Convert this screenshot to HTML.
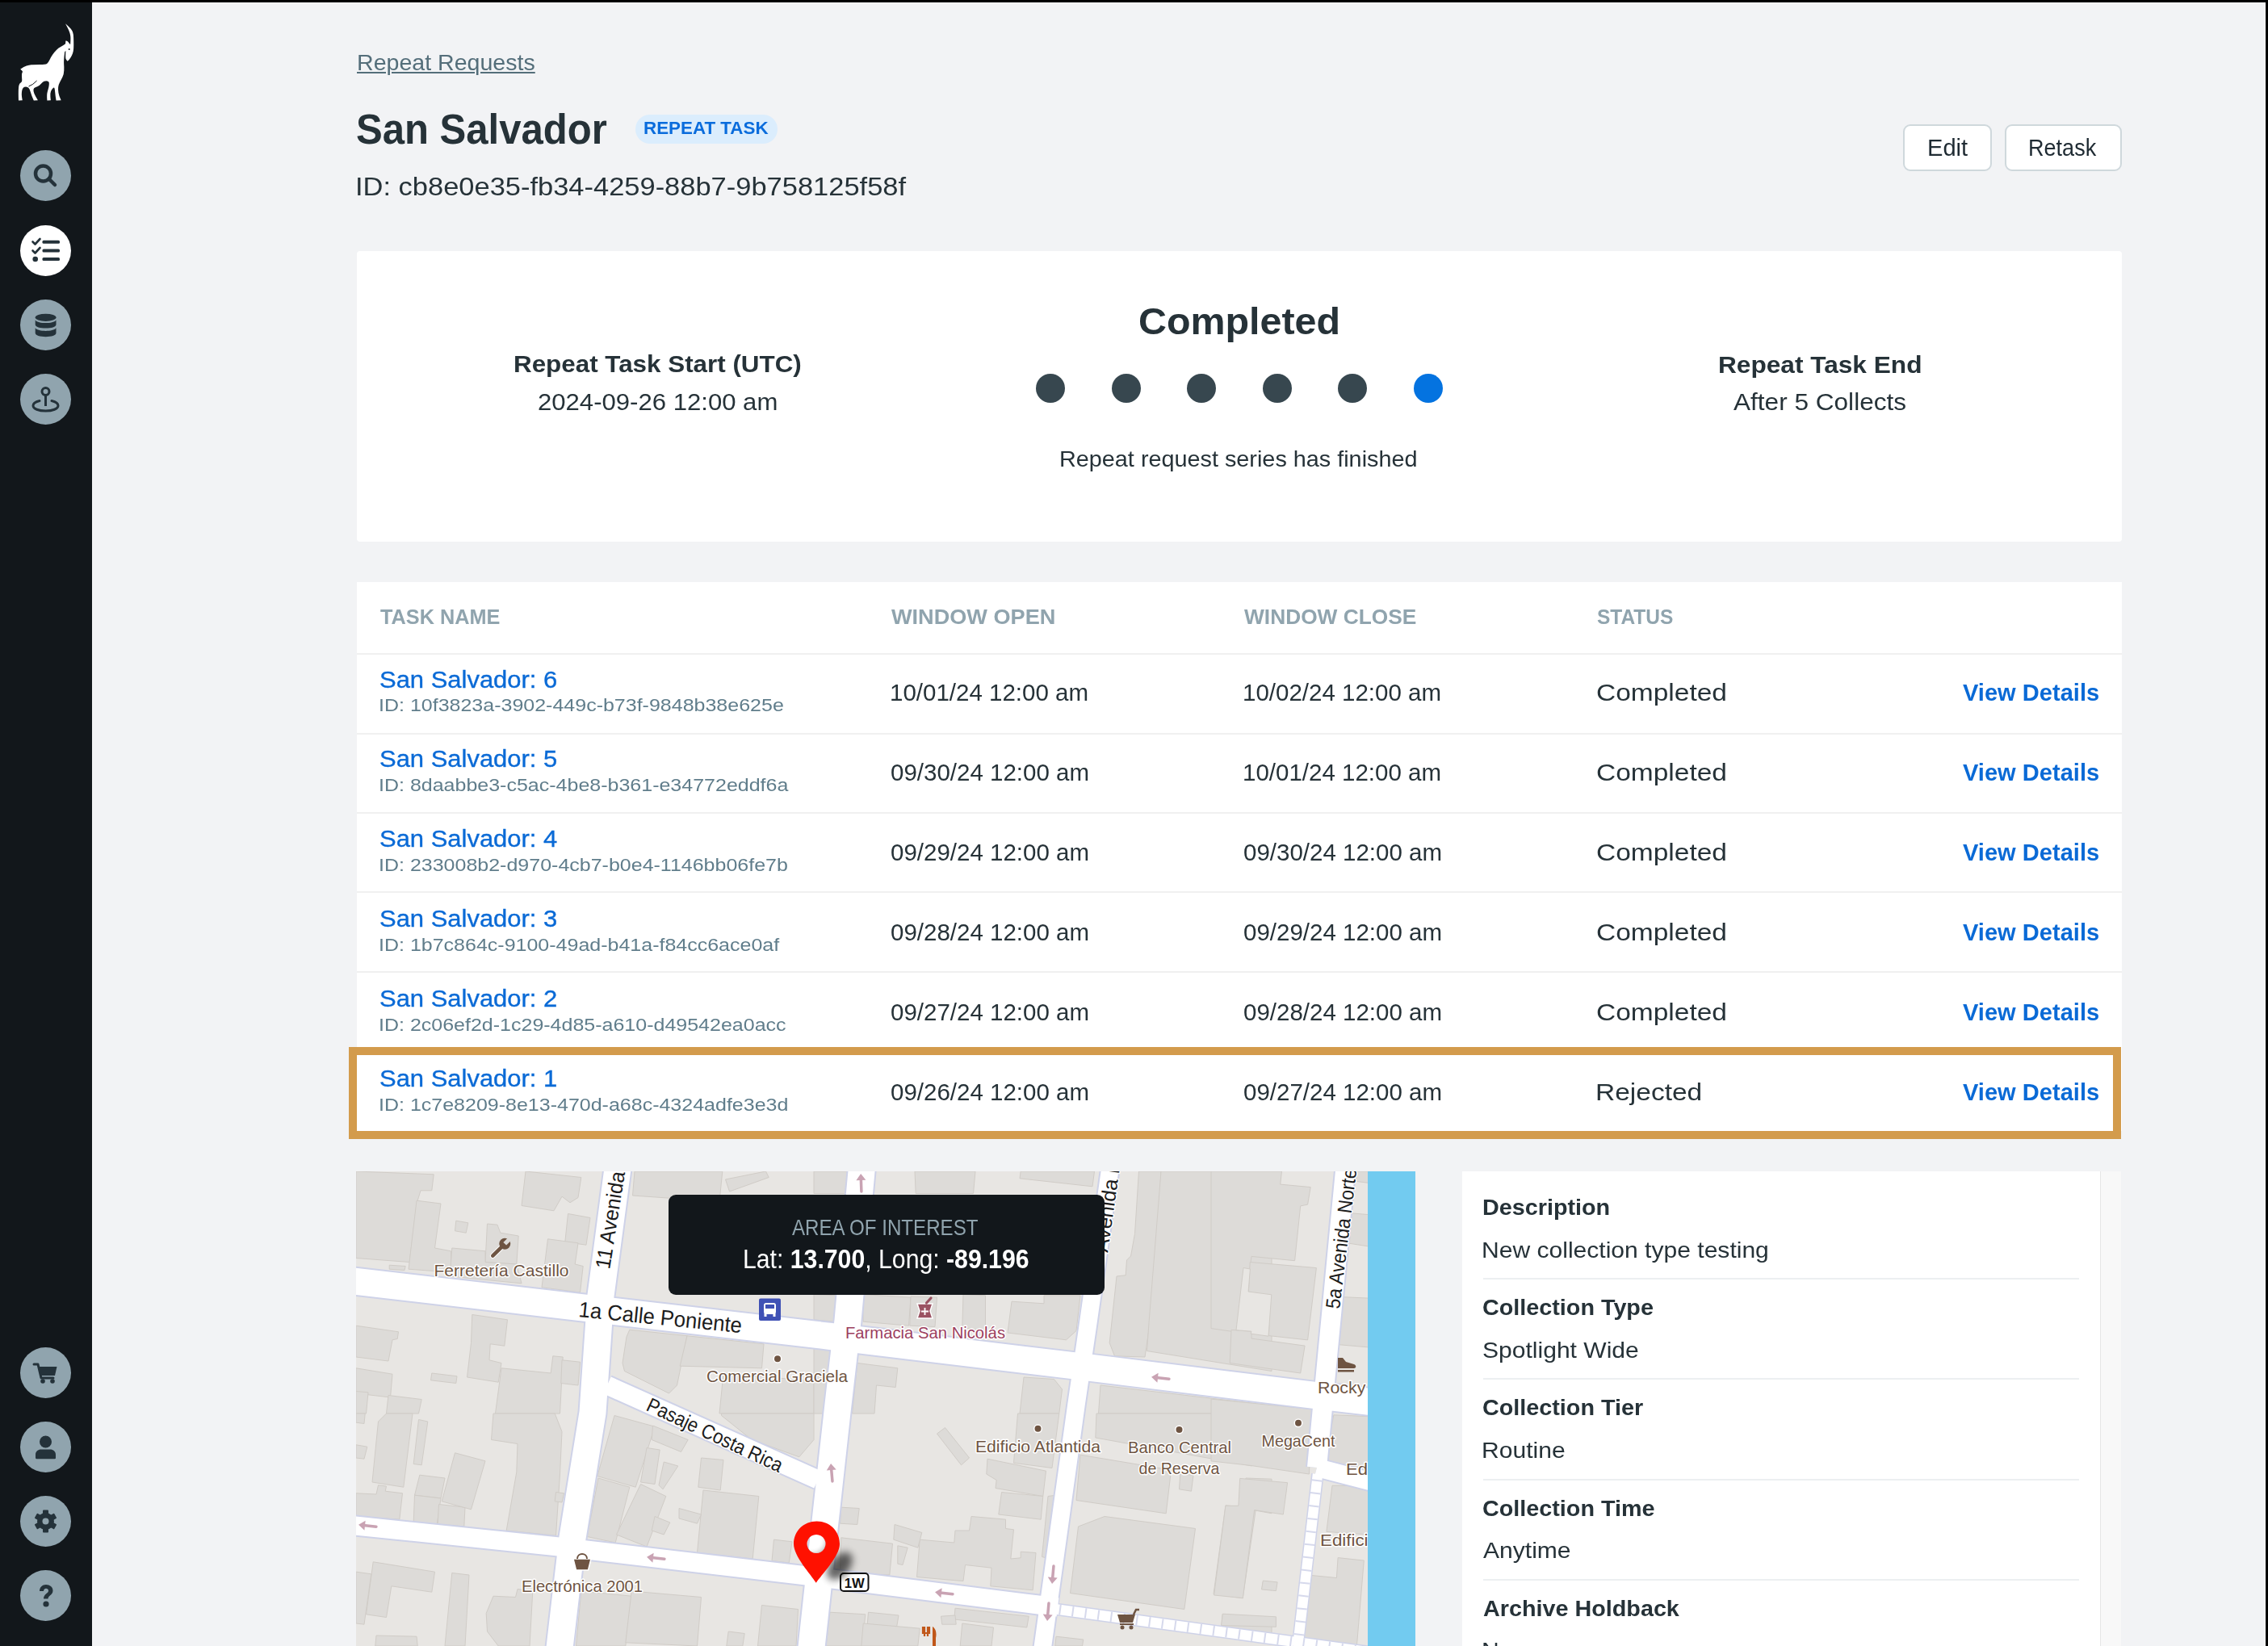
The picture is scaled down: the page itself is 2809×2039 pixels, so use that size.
<!DOCTYPE html>
<html><head><meta charset="utf-8"><title>San Salvador</title>
<style>
html,body{margin:0;padding:0;}
body{width:2809px;height:2039px;overflow:hidden;position:relative;background:#f2f3f5;font-family:"Liberation Sans",sans-serif;}
.abs{position:absolute;}
.t{position:absolute;white-space:pre;transform-origin:0 0;}
#topbar{left:0;top:0;width:2809px;height:3px;background:#000;}
#side{left:0;top:3px;width:114px;height:2036px;background:#12171b;}
.nav{position:absolute;left:25px;width:63px;height:63px;border-radius:50%;background:#90a4ae;}
.nav svg{position:absolute;left:0;top:0;}
.card{background:#fff;border-radius:4px;}
.btn{background:#fff;border:2px solid #cfd8dc;border-radius:9px;box-sizing:border-box;}
.dot{position:absolute;width:36px;height:36px;border-radius:50%;background:#37474f;top:463px;}
.sep{position:absolute;height:2px;background:#eceff1;}
</style></head>
<body>
<div id="topbar" class="abs"></div>
<div class="abs" style="left:114px;top:3px;width:2692px;height:1px;background:#fbfbfc"></div>
<div class="abs" style="left:2805px;top:3px;width:1px;height:2036px;background:#fdfdfd"></div>
<div class="abs" style="left:2806px;top:0;width:3px;height:2039px;background:#000"></div>
<div id="side" class="abs">
  <svg class="abs" style="left:0;top:-3px" width="114" height="140" viewBox="0 0 114 140">
    <path fill="#fff" d="M81.05,29.15 Q85.84,33.30 87.59,35.53 Q89.35,37.76 90.14,40.00 Q90.94,42.23 91.10,46.38 Q91.26,50.53 91.26,55.63 Q91.26,60.74 90.78,63.29 Q90.30,65.84 89.03,68.40 Q87.75,70.95 86.47,72.86 Q85.20,74.78 83.60,75.73 L83.60,75.73 Q81.69,74.14 81.37,72.54 Q81.05,70.95 81.37,62.65 L81.37,62.65 L80.09,64.57 Q78.82,76.05 79.14,79.24 Q79.45,82.43 79.29,87.22 Q79.14,92.01 77.38,95.52 Q75.63,99.03 74.03,101.90 Q72.43,104.77 72.12,107.96 Q71.80,111.15 72.43,114.98 Q73.07,118.81 75.63,124.23 L75.63,124.23 L69.56,124.55 Q68.61,118.81 68.13,113.39 Q67.65,107.96 66.53,108.60 Q65.41,109.24 63.98,111.15 Q62.54,113.07 62.38,115.94 Q62.22,118.81 62.86,124.23 L62.86,124.23 L58.40,124.55 Q57.76,117.53 58.71,114.02 Q59.67,110.51 60.31,107.96 Q60.95,105.41 60.79,102.86 Q60.63,100.30 57.28,100.30 Q53.93,100.30 52.33,102.22 Q50.74,104.13 48.82,105.73 Q46.91,107.32 44.36,107.96 Q41.80,108.60 41.48,110.83 Q41.16,113.07 42.44,115.94 Q43.72,118.81 46.91,124.23 L46.91,124.23 L41.80,124.55 Q39.25,118.81 37.65,113.39 Q36.06,107.96 33.19,107.64 Q30.32,107.32 29.04,108.60 Q27.76,109.88 27.28,112.11 Q26.81,114.34 26.81,116.90 Q26.81,119.45 27.76,124.23 L27.76,124.23 L22.98,124.55 Q22.66,114.34 22.98,109.24 Q23.30,104.13 25.37,102.86 Q27.44,101.58 27.28,99.35 Q27.13,97.11 26.97,93.92 Q26.81,90.73 27.76,89.45 Q28.72,88.18 25.21,85.63 L25.21,85.63 Q29.68,82.43 32.87,81.48 Q36.06,80.52 38.93,80.20 Q41.80,79.88 49.14,79.88 Q56.48,79.88 58.08,78.92 Q59.67,77.97 61.27,74.46 Q62.86,70.95 65.10,67.76 Q67.33,64.57 69.88,62.01 Q72.43,59.46 75.63,57.87 Q78.82,56.27 81.05,54.36 L81.05,54.36 L81.37,50.53 Q83.92,50.21 86.16,54.36 L86.16,54.36 L87.11,54.99 Q87.75,47.34 87.11,43.83 Q86.47,40.32 85.20,37.44 Q83.92,34.57 81.05,29.15 L81.05,29.15 Z"/><circle cx="85.7" cy="60.9" r="1" fill="#12171b"/><path d="M45.6,100 Q41,105 35.5,107" fill="none" stroke="#12171b" stroke-width="1"/>
  </svg>
  <!-- nav icons -->
  <div class="nav" style="top:183px"><svg width="63" height="63" viewBox="0 0 63 63"><circle cx="28.5" cy="29" r="9.5" fill="none" stroke="#24323a" stroke-width="4.5"/><line x1="35.5" y1="35.5" x2="43" y2="43" stroke="#24323a" stroke-width="4.5" stroke-linecap="round"/></svg></div>
  <div class="nav" style="top:276px;background:#fff"><svg width="63" height="63" viewBox="0 0 63 63"><path d="M15.5,20.5 l3,3 l6,-6.5" fill="none" stroke="#24323a" stroke-width="2.6" stroke-linecap="round" stroke-linejoin="round"/><path d="M15.5,31.5 l3,3 l6,-6.5" fill="none" stroke="#24323a" stroke-width="2.6" stroke-linecap="round" stroke-linejoin="round"/><circle cx="18.7" cy="42" r="3.3" fill="#24323a"/><rect x="27.5" y="18.8" width="21.5" height="4" rx="1.5" fill="#24323a"/><rect x="27.5" y="29.5" width="21.5" height="4" rx="1.5" fill="#24323a"/><rect x="27.5" y="40" width="21.5" height="4" rx="1.5" fill="#24323a"/></svg></div>
  <div class="nav" style="top:368px"><svg width="63" height="63" viewBox="0 0 63 63"><ellipse cx="31.6" cy="22.3" rx="12.9" ry="4.6" fill="#24323a"/><path d="M18.7,25.5 v5.5 c0,3 5.8,4.6 12.9,4.6 s12.9,-1.6 12.9,-4.6 v-5.5 c-2,2.6 -7,3.6 -12.9,3.6 s-10.9,-1 -12.9,-3.6z" fill="#24323a"/><path d="M18.7,35.3 v6.3 c0,3 5.8,4.6 12.9,4.6 s12.9,-1.6 12.9,-4.6 v-6.3 c-2,2.6 -7,3.6 -12.9,3.6 s-10.9,-1 -12.9,-3.6z" fill="#24323a"/></svg></div>
  <div class="nav" style="top:460px"><svg width="63" height="63" viewBox="0 0 63 63"><circle cx="31.5" cy="22" r="4.5" fill="none" stroke="#24323a" stroke-width="3"/><line x1="31.5" y1="26" x2="31.5" y2="40" stroke="#24323a" stroke-width="3"/><path d="M24,33.5 C18,35 16,37 16,39.5 C16,43.5 23,46 31.5,46 C40,46 47,43.5 47,39.5 C47,37 45,35 39,33.5" fill="none" stroke="#24323a" stroke-width="3" stroke-linecap="round"/></svg></div>
  <div class="nav" style="top:1666px"><svg width="63" height="63" viewBox="0 0 63 63"><path d="M17,21 h5 l4,17 h15" fill="none" stroke="#24323a" stroke-width="3" stroke-linecap="round" stroke-linejoin="round"/><path d="M23.5,24 h22 l-2.5,11 h-17z" fill="#24323a"/><circle cx="28" cy="42" r="2.8" fill="#24323a"/><circle cx="40" cy="42" r="2.8" fill="#24323a"/></svg></div>
  <div class="nav" style="top:1758px"><svg width="63" height="63" viewBox="0 0 63 63"><circle cx="31.5" cy="25" r="7.5" fill="#24323a"/><path d="M19,45 v-4 c0,-4 3,-6.5 7,-6.5 h11 c4,0 7,2.5 7,6.5 v4 c0,0.8 -0.5,1.2 -1.2,1.2 h-22.6 c-0.7,0 -1.2,-0.4 -1.2,-1.2z" fill="#24323a"/></svg></div>
  <div class="nav" style="top:1850px"><svg width="63" height="63" viewBox="0 0 63 63"><g transform="translate(31.5,31.5)" fill="#24323a"><circle r="10.5"/><rect x="-3.5" y="-14" width="7" height="28" rx="1"/><rect x="-3.5" y="-14" width="7" height="28" rx="1" transform="rotate(60)"/><rect x="-3.5" y="-14" width="7" height="28" rx="1" transform="rotate(120)"/></g><circle cx="31.5" cy="31.5" r="4" fill="#90a4ae"/></svg></div>
  <div class="nav" style="top:1942px"><svg width="63" height="63" viewBox="0 0 63 63"><path d="M24,26 c0,-5 3.5,-8 8,-8 c4.5,0 8.5,2.8 8.5,7.5 c0,5.5 -6,6 -6,10 h-5.5 c0,-6 6,-6.5 6,-10 c0,-1.8 -1.3,-2.8 -3,-2.8 c-1.8,0 -3,1.3 -3,3.3z" fill="#24323a"/><circle cx="32" cy="42" r="3.6" fill="#24323a"/></svg></div>
</div>

<!-- header boxes -->
<div class="abs" style="left:787px;top:141.5px;width:176px;height:36.5px;border-radius:18px;background:#dbedfd"></div>
<div class="abs btn" style="left:2357px;top:153.5px;width:110px;height:58.5px"></div>
<div class="abs btn" style="left:2483px;top:153.5px;width:145px;height:58.5px"></div>

<!-- status card -->
<div class="abs card" style="left:442px;top:311px;width:2186px;height:360px"></div>
<div class="dot" style="left:1283px"></div>
<div class="dot" style="left:1376.5px"></div>
<div class="dot" style="left:1470px"></div>
<div class="dot" style="left:1563.5px"></div>
<div class="dot" style="left:1657px"></div>
<div class="dot" style="left:1750.5px;background:#0473e0"></div>

<!-- table -->
<div class="abs card" style="left:442px;top:721px;width:2186px;height:680px;border-radius:0"></div>
<div class="sep" style="left:442px;top:809.2px;width:2186px;background:#f0f0f0"></div>
<div class="sep" style="left:442px;top:907.6px;width:2186px;background:#f0f0f0"></div>
<div class="sep" style="left:442px;top:1006px;width:2186px;background:#f0f0f0"></div>
<div class="sep" style="left:442px;top:1104.4px;width:2186px;background:#f0f0f0"></div>
<div class="sep" style="left:442px;top:1202.8px;width:2186px;background:#f0f0f0"></div>
<div class="abs" style="left:432px;top:1297px;width:2195px;height:113.5px;box-sizing:border-box;border:10px solid #d39b4c"></div>

<!-- map -->
<div class="abs" style="left:441px;top:1451px;width:1253px;height:588px;background:#e8e6e3;overflow:hidden">
<svg width="1253" height="588" viewBox="441 1451 1253 588" style="position:absolute;left:0;top:0">
<g fill="#dddbd8" stroke="#d0ccc7" stroke-width="1">
<polygon points="441.0,1451.0 537.2,1454.8 534.8,1474.8 521.0,1474.8 516.0,1491.0 507.2,1563.5 441.0,1558.5"/>
<polygon points="516.0,1487.2 546.0,1491.0 538.5,1546.0 558.5,1549.8 558.5,1576.0 506.0,1572.2"/>
<polygon points="603.5,1516.0 616.0,1517.2 619.8,1527.2 642.2,1531.0 639.8,1566.0 601.0,1563.5"/>
<polygon points="559.8,1546.0 601.0,1549.8 601.0,1563.5 639.8,1566.0 646.0,1589.8 557.2,1581.0"/>
<polygon points="564.8,1512.2 579.8,1514.8 577.2,1527.2 563.5,1524.8"/>
<polygon points="651.0,1451.0 719.8,1458.5 716.0,1483.5 706.0,1489.8 696.0,1482.2 686.0,1499.8 646.0,1493.5"/>
<polygon points="703.5,1503.5 731.0,1508.5 726.0,1542.2 699.8,1538.5"/>
<polygon points="678.5,1534.8 716.0,1539.8 712.2,1566.0 722.2,1568.5 718.5,1601.0 671.0,1594.8"/>
<polygon points="482.2,1567.2 502.2,1568.5 501.0,1573.5 482.2,1572.2"/>
<polygon points="786.0,1451.0 894.8,1451.0 891.0,1488.5 783.5,1481.0"/>
<polygon points="898.5,1461.0 948.5,1451.0 952.2,1458.5 903.5,1476.0"/>
<polygon points="441.0,1642.2 493.5,1649.8 492.2,1658.5 486.0,1659.8 481.0,1686.0 441.0,1681.0"/>
<polygon points="441.0,1694.8 486.0,1702.2 483.5,1731.0 441.0,1726.0"/>
<polygon points="584.8,1628.5 628.5,1634.8 624.8,1667.2 607.2,1664.8 606.0,1684.8 621.0,1688.5 617.2,1712.2 578.5,1706.0 583.5,1663.5"/>
<polygon points="621.0,1694.8 682.2,1701.0 684.8,1679.8 697.2,1681.0 693.5,1751.0 613.5,1751.0"/>
<polygon points="696.0,1684.8 718.5,1687.2 716.0,1716.0 694.8,1713.5"/>
<polygon points="534.8,1701.0 566.0,1704.8 564.8,1713.5 533.5,1709.8"/>
<polygon points="481.0,1728.5 522.2,1733.5 518.5,1751.0 478.5,1751.0"/>
<polygon points="441.0,1723.5 456.0,1724.8 453.5,1751.0 441.0,1751.0"/>
<polygon points="779.8,1647.2 851.0,1654.8 838.5,1716.0 828.5,1726.0 773.5,1698.5 771.0,1688.5 776.0,1656.0"/>
<polygon points="851.0,1654.8 946.0,1664.8 943.5,1694.8 842.2,1692.2"/>
<polygon points="896.0,1701.0 1008.0,1711.0 1008.0,1751.0 891.0,1751.0"/>
<polygon points="1068.0,1603.5 1128.0,1607.2 1125.5,1642.2 1069.2,1637.2"/>
<polygon points="1128.0,1606.0 1160.5,1607.2 1158.0,1643.5 1126.8,1642.2"/>
<polygon points="1193.0,1603.5 1220.5,1604.8 1220.5,1648.5 1191.8,1644.8"/>
<polygon points="1253.0,1612.2 1293.0,1614.8 1293.0,1604.8 1338.0,1604.8 1333.0,1648.5 1320.5,1659.8 1248.0,1651.0"/>
<polygon points="1133.0,1451.0 1208.0,1451.0 1205.5,1478.5 1134.2,1478.5"/>
<polygon points="1264.2,1451.0 1355.5,1451.0 1353.0,1469.8 1263.0,1459.8"/>
<polygon points="1008.0,1451.0 1050.5,1451.0 1049.2,1478.5 1008.0,1478.5"/>
<polygon points="1008.0,1603.5 1035.5,1604.8 1033.0,1637.2 1008.0,1634.8"/>
<polygon points="1410.5,1451.0 1438.0,1451.0 1433.0,1551.0 1430.5,1561.0 1431.8,1587.2 1418.0,1681.0 1380.5,1679.8 1374.2,1663.5 1383.0,1581.0 1394.2,1579.8 1395.5,1561.0 1400.5,1556.0 1405.5,1528.5"/>
<polygon points="1438.0,1451.0 1575.0,1451.0 1575.0,1698.5 1420.5,1673.5 1423.0,1638.5"/>
<polygon points="1061.8,1688.5 1111.8,1694.8 1109.2,1718.5 1085.5,1716.0 1083.0,1751.0 1055.5,1751.0"/>
<polygon points="1268.0,1706.0 1305.5,1708.5 1315.5,1721.0 1311.8,1751.0 1263.0,1751.0"/>
<polygon points="1008.0,1668.5 1030.5,1671.0 1025.5,1751.0 1008.0,1751.0"/>
<polygon points="1363.0,1716.0 1575.0,1741.0 1575.0,1751.0 1360.5,1751.0"/>
<polygon points="441.0,1751.0 452.2,1751.0 451.0,1763.5 441.0,1762.2"/>
<polygon points="468.5,1761.0 478.5,1751.0 511.0,1751.0 499.8,1842.2 461.0,1836.0"/>
<polygon points="518.5,1758.5 529.8,1761.0 522.2,1814.8 512.2,1813.5"/>
<polygon points="441.0,1789.8 454.8,1792.2 451.0,1807.2 441.0,1806.0"/>
<polygon points="441.0,1849.8 466.0,1851.0 468.5,1839.8 478.5,1841.0 477.2,1847.2 498.5,1849.8 494.8,1882.2 441.0,1878.5"/>
<polygon points="519.8,1827.2 551.0,1831.0 546.0,1856.0 513.5,1852.2"/>
<polygon points="513.5,1852.2 546.0,1856.0 541.0,1889.8 512.2,1886.0"/>
<polygon points="543.5,1863.5 576.0,1867.2 574.8,1891.0 542.2,1888.0"/>
<polygon points="563.5,1799.8 601.0,1809.8 583.5,1869.8 547.2,1859.8"/>
<polygon points="611.0,1751.0 687.2,1751.0 696.0,1773.5 693.5,1826.0 688.5,1902.2 627.2,1896.0 639.8,1823.5 641.0,1788.5 608.5,1783.5"/>
<polygon points="688.5,1848.5 698.5,1849.8 696.0,1861.0 687.2,1859.8"/>
<polygon points="462.2,1934.8 538.5,1947.2 534.8,1972.2 484.8,1964.8 478.5,2003.5 453.5,1999.8"/>
<polygon points="559.8,1948.5 581.0,1951.0 576.0,2039.0 551.0,2039.0"/>
<polygon points="611.0,1977.2 638.5,1978.5 641.0,1968.5 659.8,1971.0 656.0,2039.0 617.2,2039.0 603.5,2021.0 602.2,1998.5"/>
<polygon points="441.0,1947.2 459.8,1949.8 451.0,2012.2 441.0,2011.0"/>
<polygon points="466.0,2026.0 516.0,2027.2 517.2,2039.0 464.8,2039.0"/>
<polygon points="761.0,1753.5 811.0,1767.2 787.2,1842.2 739.8,1828.5"/>
<polygon points="808.5,1766.0 852.2,1783.5 843.5,1798.5 807.2,1783.5"/>
<polygon points="741.0,1831.0 779.8,1842.2 762.2,1911.0 727.2,1903.5"/>
<polygon points="793.5,1838.5 824.8,1853.5 801.0,1916.0 763.5,1901.0"/>
<polygon points="801.0,1793.5 817.2,1796.0 811.0,1838.5 793.5,1836.0"/>
<polygon points="822.2,1811.0 839.8,1816.0 821.0,1844.8 816.0,1839.8"/>
<polygon points="868.5,1806.0 896.0,1808.5 892.2,1846.0 864.8,1842.2"/>
<polygon points="871.0,1846.0 939.8,1853.5 932.2,1931.0 863.5,1923.5"/>
<polygon points="841.0,1868.5 868.5,1876.0 863.5,1887.2 841.0,1881.0"/>
<polygon points="811.0,1878.5 829.8,1886.0 822.2,1901.0 807.2,1896.0"/>
<polygon points="958.5,1907.2 981.0,1909.8 977.2,1936.0 956.0,1933.5"/>
<polygon points="893.5,1751.0 1008.0,1751.0 1008.0,1783.5 989.8,1804.8 931.0,1783.5 893.5,1753.5"/>
<polygon points="719.8,1971.0 782.2,1977.2 774.8,2039.0 713.5,2039.0"/>
<polygon points="782.2,1971.0 868.5,1978.5 863.5,2039.0 774.8,2034.8"/>
<polygon points="943.5,1988.5 988.5,1993.5 986.0,2039.0 938.5,2039.0"/>
<polygon points="902.2,2021.0 922.2,2023.5 919.8,2039.0 899.8,2039.0"/>
<polygon points="1160.5,1776.0 1170.5,1768.5 1200.5,1806.0 1190.5,1814.8"/>
<polygon points="1260.5,1751.0 1311.8,1751.0 1303.0,1818.5 1255.5,1812.2"/>
<polygon points="1223.0,1807.2 1295.5,1822.2 1291.8,1853.5 1233.0,1843.5 1234.2,1833.5 1221.8,1826.0"/>
<polygon points="1240.5,1848.5 1291.8,1853.5 1289.2,1882.2 1236.8,1876.0"/>
<polygon points="1203.0,1878.5 1245.5,1882.2 1245.5,1893.5 1255.5,1894.8 1251.8,1931.0 1264.2,1929.8 1264.2,1922.2 1283.0,1923.5 1279.2,1969.8 1226.8,1964.8 1228.0,1942.2 1195.5,1938.5 1193.0,1958.5 1176.8,1957.2 1135.5,1953.5 1139.2,1907.2 1181.8,1911.0 1183.0,1896.0 1200.5,1896.0"/>
<polygon points="1108.0,1888.5 1141.8,1898.5 1136.8,1917.2 1106.8,1907.2"/>
<polygon points="1041.8,1904.8 1105.5,1912.2 1101.8,1951.0 1040.5,1948.5"/>
<polygon points="1041.8,1867.2 1064.2,1868.5 1061.8,1888.5 1040.5,1887.2"/>
<polygon points="1111.8,1914.8 1124.2,1917.2 1118.0,1938.5 1111.8,1937.2"/>
<polygon points="1298.0,1853.5 1308.0,1852.2 1295.5,1929.8 1290.5,1928.5"/>
<polygon points="1358.0,1751.0 1561.8,1751.0 1550.5,1816.0 1356.8,1781.0"/>
<polygon points="1338.0,1802.2 1450.5,1821.0 1444.2,1874.8 1333.0,1858.5"/>
<polygon points="1335.5,1891.0 1368.0,1878.5 1480.5,1893.5 1466.8,1993.5 1325.5,1973.5"/>
<polygon points="1518.0,1864.8 1555.5,1868.5 1539.2,1979.8 1503.0,1974.8"/>
<polygon points="1543.0,1831.0 1575.0,1832.2 1575.0,1874.8 1534.2,1867.2"/>
<polygon points="1461.8,1826.0 1478.0,1827.2 1475.5,1847.2 1460.5,1844.8"/>
<polygon points="1564.2,1959.8 1575.0,1961.0 1575.0,1969.8 1563.0,1968.5"/>
<polygon points="1028.0,1997.2 1071.8,1999.8 1068.0,2039.0 1023.0,2039.0"/>
<polygon points="1075.5,1997.2 1113.0,2001.0 1110.5,2016.0 1074.2,2012.2"/>
<polygon points="1069.2,2011.0 1139.2,2017.2 1136.8,2039.0 1066.8,2039.0"/>
<polygon points="1183.0,1992.2 1274.2,2002.2 1271.8,2016.0 1181.8,2006.0"/>
<polygon points="1191.8,2011.0 1230.5,2016.0 1228.0,2039.0 1189.2,2039.0"/>
<polygon points="1165.5,2002.2 1183.0,2001.0 1184.2,2012.2 1166.8,2012.2"/>
<polygon points="1308.0,2027.2 1341.8,2031.0 1340.5,2039.0 1306.8,2039.0"/>
<polygon points="1514.2,1999.8 1575.0,2003.5 1575.0,2023.5 1513.0,2016.0"/>
<polygon points="1500.0,1451.0 1587.5,1451.0 1585.7,1467.1 1623.2,1470.6 1619.6,1492.1 1610.7,1493.9 1603.6,1561.7 1550.0,1556.4 1537.5,1651.0 1500.0,1645.6"/>
<polygon points="1548.2,1563.5 1630.4,1570.6 1619.6,1659.9 1571.4,1654.6 1573.2,1604.6 1546.4,1601.0"/>
<polygon points="1525.0,1647.4 1550.0,1649.2 1550.0,1658.1 1616.1,1667.1 1610.7,1701.0 1523.2,1688.5"/>
<polygon points="1500.0,1733.1 1625.0,1745.6 1621.4,1826.0 1548.2,1815.3 1500.0,1809.9"/>
<polygon points="1535.7,1831.4 1594.6,1836.7 1589.3,1876.0 1553.6,1870.6 1539.3,1979.6 1503.6,1976.0 1517.9,1865.3 1533.9,1865.3"/>
<polygon points="1650.0,1840.3 1694.6,1840.3 1694.6,1901.0 1642.9,1897.4"/>
<polygon points="1619.6,1951.0 1655.4,1954.6 1657.1,1929.6 1689.3,1933.1 1680.4,2038.9 1614.3,2038.9"/>
<polygon points="1678.6,1451.0 1694.6,1451.0 1694.6,1465.3 1680.4,1463.5"/>
<polygon points="1673.2,1502.8 1694.6,1504.6 1694.6,1543.9 1671.4,1540.3"/>
<polygon points="1657.1,1606.4 1694.6,1608.1 1694.6,1668.9 1653.6,1665.3"/>
<polygon points="1651.8,1752.8 1694.6,1754.6 1694.6,1820.6 1641.1,1813.5"/>
<polygon points="1514.3,1999.2 1580.4,2002.8 1580.4,2015.3 1512.5,2013.5"/>
<polygon points="1564.3,1958.1 1582.1,1959.9 1580.4,1970.6 1562.5,1968.9"/>
</g>
<polygon points="1540.0,1570.5 1548.4,1572.0 1546.1,1600.0 1574.8,1603.8 1571.0,1655.2 1549.1,1652.2 1549.9,1649.2 1531.0,1647.7" fill="#e8e6e3" stroke="#d0ccc7" stroke-width="1"/>
<g fill="none" stroke="#ced2e8" stroke-linejoin="round">
<polyline points="430.0,1586.0 727.0,1620.5 1029.0,1655.5 1332.0,1692.0 1629.0,1728.5 1710.0,1738.0" stroke-width="37"/>
<polyline points="766.0,1440.0 744.0,1605.0 734.0,1750.0 709.0,1905.0 692.0,2050.0" stroke-width="37"/>
<polyline points="1068.0,1440.0 1050.0,1636.0 1038.0,1740.0 1013.5,1962.0 1004.0,2050.0" stroke-width="37"/>
<polyline points="1376.0,1440.0 1347.6,1640.0 1333.0,1740.0 1300.0,1978.0 1290.0,2050.0" stroke-width="25.5"/>
<polyline points="1667.0,1440.0 1641.0,1712.0 1631.0,1818.0" stroke-width="28"/>
<polyline points="430.0,1889.0 692.0,1916.0 995.0,1951.5 1290.0,1988.5 1310.0,1991.0" stroke-width="27"/>
<polyline points="752.0,1716.0 1013.0,1833.0" stroke-width="27"/>
<polyline points="1631.0,1818.0 1700.0,1836.0" stroke-width="26"/>
<polyline points="1305.0,1993.0 1575.0,2030.0 1700.0,2047.0" stroke-width="15.5"/>
<polyline points="1632.0,1826.0 1606.0,2050.0" stroke-width="15.5"/>
</g><g fill="none" stroke="#ffffff" stroke-linejoin="round">
<polyline points="430.0,1586.0 727.0,1620.5 1029.0,1655.5 1332.0,1692.0 1629.0,1728.5 1710.0,1738.0" stroke-width="33"/>
<polyline points="766.0,1440.0 744.0,1605.0 734.0,1750.0 709.0,1905.0 692.0,2050.0" stroke-width="33"/>
<polyline points="1068.0,1440.0 1050.0,1636.0 1038.0,1740.0 1013.5,1962.0 1004.0,2050.0" stroke-width="33"/>
<polyline points="1376.0,1440.0 1347.6,1640.0 1333.0,1740.0 1300.0,1978.0 1290.0,2050.0" stroke-width="21.5"/>
<polyline points="1667.0,1440.0 1641.0,1712.0 1631.0,1818.0" stroke-width="24"/>
<polyline points="430.0,1889.0 692.0,1916.0 995.0,1951.5 1290.0,1988.5 1310.0,1991.0" stroke-width="23"/>
<polyline points="752.0,1716.0 1013.0,1833.0" stroke-width="23"/>
<polyline points="1631.0,1818.0 1700.0,1836.0" stroke-width="22"/>
<polyline points="1305.0,1993.0 1575.0,2030.0 1700.0,2047.0" stroke-width="12.5"/>
<polyline points="1632.0,1826.0 1606.0,2050.0" stroke-width="12.5"/>
</g>
<g fill="none" stroke="#d6d9ec" stroke-width="2">
<line x1="1313.8" y1="1987.9" x2="1312.1" y2="2000.3"/>
<line x1="1329.6" y1="1990.1" x2="1327.9" y2="2002.5"/>
<line x1="1345.5" y1="1992.2" x2="1343.8" y2="2004.6"/>
<line x1="1361.3" y1="1994.4" x2="1359.6" y2="2006.8"/>
<line x1="1377.2" y1="1996.6" x2="1375.5" y2="2009.0"/>
<line x1="1393.0" y1="1998.8" x2="1391.3" y2="2011.1"/>
<line x1="1408.9" y1="2000.9" x2="1407.2" y2="2013.3"/>
<line x1="1424.7" y1="2003.1" x2="1423.0" y2="2015.5"/>
<line x1="1440.6" y1="2005.3" x2="1438.9" y2="2017.7"/>
<line x1="1456.4" y1="2007.4" x2="1454.7" y2="2019.8"/>
<line x1="1472.3" y1="2009.6" x2="1470.6" y2="2022.0"/>
<line x1="1488.1" y1="2011.8" x2="1486.4" y2="2024.2"/>
<line x1="1504.0" y1="2014.0" x2="1502.3" y2="2026.3"/>
<line x1="1519.8" y1="2016.1" x2="1518.2" y2="2028.5"/>
<line x1="1535.7" y1="2018.3" x2="1534.0" y2="2030.7"/>
<line x1="1551.6" y1="2020.5" x2="1549.9" y2="2032.9"/>
<line x1="1567.4" y1="2022.7" x2="1565.7" y2="2035.0"/>
<line x1="1583.8" y1="2024.9" x2="1582.1" y2="2037.3"/>
<line x1="1599.6" y1="2027.0" x2="1597.9" y2="2039.4"/>
<line x1="1615.5" y1="2029.2" x2="1613.8" y2="2041.6"/>
<line x1="1631.3" y1="2031.4" x2="1629.6" y2="2043.7"/>
<line x1="1647.2" y1="2033.5" x2="1645.5" y2="2045.9"/>
<line x1="1663.0" y1="2035.7" x2="1661.4" y2="2048.1"/>
<line x1="1678.9" y1="2037.8" x2="1677.2" y2="2050.2"/>
<line x1="1694.7" y1="2040.0" x2="1693.1" y2="2052.4"/>
<line x1="1637.3" y1="1834.7" x2="1624.9" y2="1833.2"/>
<line x1="1635.4" y1="1850.6" x2="1623.0" y2="1849.1"/>
<line x1="1633.6" y1="1866.5" x2="1621.2" y2="1865.0"/>
<line x1="1631.8" y1="1882.3" x2="1619.3" y2="1880.9"/>
<line x1="1629.9" y1="1898.2" x2="1617.5" y2="1896.8"/>
<line x1="1628.1" y1="1914.1" x2="1615.6" y2="1912.7"/>
<line x1="1626.2" y1="1930.0" x2="1613.8" y2="1928.6"/>
<line x1="1624.4" y1="1945.9" x2="1612.0" y2="1944.5"/>
<line x1="1622.5" y1="1961.8" x2="1610.1" y2="1960.4"/>
<line x1="1620.7" y1="1977.7" x2="1608.3" y2="1976.3"/>
<line x1="1618.8" y1="1993.6" x2="1606.4" y2="1992.2"/>
<line x1="1617.0" y1="2009.5" x2="1604.6" y2="2008.1"/>
<line x1="1615.1" y1="2025.4" x2="1602.7" y2="2023.9"/>
<line x1="1613.3" y1="2041.3" x2="1600.9" y2="2039.8"/>
</g>
<text x="537.5" y="1581" font-size="21" font-family="Liberation Sans, sans-serif" fill="#6e5442" font-weight="400" text-anchor="start" stroke="#ffffff" stroke-width="3" paint-order="stroke" stroke-linejoin="round" textLength="167" lengthAdjust="spacingAndGlyphs">Ferretería Castillo</text>
<text x="875" y="1711.5" font-size="21" font-family="Liberation Sans, sans-serif" fill="#6e5442" font-weight="400" text-anchor="start" stroke="#ffffff" stroke-width="3" paint-order="stroke" stroke-linejoin="round" textLength="175" lengthAdjust="spacingAndGlyphs">Comercial Graciela</text>
<text x="1047" y="1657.5" font-size="21" font-family="Liberation Sans, sans-serif" fill="#9c405e" font-weight="400" text-anchor="start" stroke="#ffffff" stroke-width="3" paint-order="stroke" stroke-linejoin="round" textLength="198" lengthAdjust="spacingAndGlyphs">Farmacia San Nicolás</text>
<text x="1208" y="1798.5" font-size="21" font-family="Liberation Sans, sans-serif" fill="#6e5442" font-weight="400" text-anchor="start" stroke="#ffffff" stroke-width="3" paint-order="stroke" stroke-linejoin="round" textLength="155" lengthAdjust="spacingAndGlyphs">Edificio Atlantida</text>
<text x="1397" y="1800" font-size="21" font-family="Liberation Sans, sans-serif" fill="#6e5442" font-weight="400" text-anchor="start" stroke="#ffffff" stroke-width="3" paint-order="stroke" stroke-linejoin="round" textLength="128" lengthAdjust="spacingAndGlyphs">Banco Central</text>
<text x="1410.5" y="1826" font-size="21" font-family="Liberation Sans, sans-serif" fill="#6e5442" font-weight="400" text-anchor="start" stroke="#ffffff" stroke-width="3" paint-order="stroke" stroke-linejoin="round" textLength="100" lengthAdjust="spacingAndGlyphs">de Reserva</text>
<text x="1562.5" y="1792" font-size="21" font-family="Liberation Sans, sans-serif" fill="#6e5442" font-weight="400" text-anchor="start" stroke="#ffffff" stroke-width="3" paint-order="stroke" stroke-linejoin="round" textLength="91" lengthAdjust="spacingAndGlyphs">MegaCent</text>
<text x="1632" y="1726" font-size="21" font-family="Liberation Sans, sans-serif" fill="#6e5442" font-weight="400" text-anchor="start" stroke="#ffffff" stroke-width="3" paint-order="stroke" stroke-linejoin="round" textLength="70" lengthAdjust="spacingAndGlyphs">Rocky l</text>
<text x="1667" y="1826.7" font-size="21" font-family="Liberation Sans, sans-serif" fill="#6e5442" font-weight="400" text-anchor="start" stroke="#ffffff" stroke-width="3" paint-order="stroke" stroke-linejoin="round" textLength="32" lengthAdjust="spacingAndGlyphs">Edi</text>
<text x="1635" y="1915.3" font-size="21" font-family="Liberation Sans, sans-serif" fill="#6e5442" font-weight="400" text-anchor="start" stroke="#ffffff" stroke-width="3" paint-order="stroke" stroke-linejoin="round" textLength="72" lengthAdjust="spacingAndGlyphs">Edificio</text>
<text x="646" y="1972.3" font-size="21" font-family="Liberation Sans, sans-serif" fill="#6e5442" font-weight="400" text-anchor="start" stroke="#ffffff" stroke-width="3" paint-order="stroke" stroke-linejoin="round" textLength="150" lengthAdjust="spacingAndGlyphs">Electrónica 2001</text>
<text x="755" y="1573" font-size="26" font-family="Liberation Sans, sans-serif" fill="#1c1c1c" font-weight="400" text-anchor="start" transform="rotate(-81 755 1573)" stroke="#ffffff" stroke-width="3" paint-order="stroke" stroke-linejoin="round" textLength="122" lengthAdjust="spacingAndGlyphs">11 Avenida</text>
<text x="716" y="1631" font-size="27" font-family="Liberation Sans, sans-serif" fill="#1c1c1c" font-weight="400" text-anchor="start" transform="rotate(5.7 716 1631)" stroke="#ffffff" stroke-width="3" paint-order="stroke" stroke-linejoin="round" textLength="203" lengthAdjust="spacingAndGlyphs">1a Calle Poniente</text>
<text x="799" y="1746.4" font-size="25" font-family="Liberation Sans, sans-serif" fill="#1c1c1c" font-weight="400" text-anchor="start" transform="rotate(25.2 799 1746.4)" stroke="#ffffff" stroke-width="3" paint-order="stroke" stroke-linejoin="round" textLength="183" lengthAdjust="spacingAndGlyphs">Pasaje Costa Rica</text>
<text x="1659" y="1622" font-size="25" font-family="Liberation Sans, sans-serif" fill="#1c1c1c" font-weight="400" text-anchor="start" transform="rotate(-83 1659 1622)" stroke="#ffffff" stroke-width="3" paint-order="stroke" stroke-linejoin="round" textLength="175" lengthAdjust="spacingAndGlyphs">5a Avenida Norte</text>
<text x="1372" y="1552" font-size="25" font-family="Liberation Sans, sans-serif" fill="#1c1c1c" font-weight="400" text-anchor="start" transform="rotate(-82 1372 1552)" stroke="#ffffff" stroke-width="3" paint-order="stroke" stroke-linejoin="round" textLength="104" lengthAdjust="spacingAndGlyphs">Avenida l</text>
<circle cx="963" cy="1683.2" r="5.5" fill="#fff"/><circle cx="963" cy="1683.2" r="4" fill="#6e5442"/>
<circle cx="1285.5" cy="1769.8" r="5.5" fill="#fff"/><circle cx="1285.5" cy="1769.8" r="4" fill="#6e5442"/>
<circle cx="1460.5" cy="1771" r="5.5" fill="#fff"/><circle cx="1460.5" cy="1771" r="4" fill="#6e5442"/>
<circle cx="1608" cy="1762.8" r="5.5" fill="#fff"/><circle cx="1608" cy="1762.8" r="4" fill="#6e5442"/>
<g transform="translate(1066.5 1465) rotate(-92)"><line x1="-11.0" y1="0" x2="7.0" y2="0" stroke="#c9a3b3" stroke-width="3.5" stroke-linecap="round"/><path d="M11.0,0 L3.0,-6 L3.0,6 Z" fill="#c9a3b3"/></g>
<g transform="translate(1437 1707) rotate(186)"><line x1="-11.0" y1="0" x2="7.0" y2="0" stroke="#c9a3b3" stroke-width="3.5" stroke-linecap="round"/><path d="M11.0,0 L3.0,-6 L3.0,6 Z" fill="#c9a3b3"/></g>
<g transform="translate(1030 1824) rotate(-95)"><line x1="-11.0" y1="0" x2="7.0" y2="0" stroke="#c9a3b3" stroke-width="3.5" stroke-linecap="round"/><path d="M11.0,0 L3.0,-6 L3.0,6 Z" fill="#c9a3b3"/></g>
<g transform="translate(455 1890) rotate(186)"><line x1="-11.0" y1="0" x2="7.0" y2="0" stroke="#c9a3b3" stroke-width="3.5" stroke-linecap="round"/><path d="M11.0,0 L3.0,-6 L3.0,6 Z" fill="#c9a3b3"/></g>
<g transform="translate(812 1930) rotate(186)"><line x1="-11.0" y1="0" x2="7.0" y2="0" stroke="#c9a3b3" stroke-width="3.5" stroke-linecap="round"/><path d="M11.0,0 L3.0,-6 L3.0,6 Z" fill="#c9a3b3"/></g>
<g transform="translate(1169 1973.5) rotate(186)"><line x1="-11.0" y1="0" x2="7.0" y2="0" stroke="#c9a3b3" stroke-width="3.5" stroke-linecap="round"/><path d="M11.0,0 L3.0,-6 L3.0,6 Z" fill="#c9a3b3"/></g>
<g transform="translate(1304 1951) rotate(95)"><line x1="-11.0" y1="0" x2="7.0" y2="0" stroke="#c9a3b3" stroke-width="3.5" stroke-linecap="round"/><path d="M11.0,0 L3.0,-6 L3.0,6 Z" fill="#c9a3b3"/></g>
<g transform="translate(1298 1997) rotate(95)"><line x1="-11.0" y1="0" x2="7.0" y2="0" stroke="#c9a3b3" stroke-width="3.5" stroke-linecap="round"/><path d="M11.0,0 L3.0,-6 L3.0,6 Z" fill="#c9a3b3"/></g>
<g transform="translate(621 1545) rotate(45)"><rect x="-2.8" y="-2" width="5.6" height="20" rx="2.8" fill="#6e5442" stroke="#fff" stroke-width="1"/><circle cx="0" cy="-6" r="7" fill="#6e5442"/><rect x="-2.6" y="-14" width="5.2" height="8" fill="#dddbd8"/></g>
<rect x="940" y="1608.5" width="27" height="27.5" rx="2" fill="#3f51b5"/><rect x="946" y="1614" width="15" height="14" rx="3" fill="#fff"/><rect x="948" y="1616" width="11" height="5" fill="#3f51b5"/><rect x="946.5" y="1627" width="3" height="4" fill="#fff"/><rect x="957.5" y="1627" width="3" height="4" fill="#fff"/>
<path d="M1136,1615 h19 l-3,9 l3,9 h-19 l3,-9z" fill="#9a5262" stroke="#fff" stroke-width="1.5"/><path d="M1145.5,1620 v9 M1141,1624.5 h9" stroke="#fff" stroke-width="1.8"/><line x1="1147.5" y1="1614" x2="1153" y2="1608" stroke="#9a5262" stroke-width="3.2" stroke-linecap="round"/>
<path d="M710,1931 h22 l-3.5,14 h-15z" fill="#6e5442" stroke="#fff" stroke-width="1.5"/><path d="M715,1931 c0,-8 12,-8 12,0" fill="none" stroke="#6e5442" stroke-width="2"/>
<path d="M1384,2000 h22 l-3,10 h-16z" fill="#6e5442"/><path d="M1404,2000 l3,-6 h4" fill="none" stroke="#6e5442" stroke-width="2.5"/><circle cx="1390" cy="2016" r="2.5" fill="#6e5442"/><circle cx="1401" cy="2016" r="2.5" fill="#6e5442"/><line x1="1387" y1="2012" x2="1404" y2="2012" stroke="#6e5442" stroke-width="2"/>
<path d="M1657,1682 h6 l4,5 l10,3 c3,1 3,5 0,5 h-20z" fill="#6e5442"/><rect x="1657" y="1697" width="20" height="2.5" fill="#6e5442"/>
<path d="M1145,2015 v12 M1149,2015 v12 M1143,2015 v8 h8 v-8" fill="none" stroke="#c0571a" stroke-width="2.2"/><path d="M1155,2015 c5,3 5,10 4,14 v12 h-4z" fill="#c0571a"/>
<rect x="1041" y="1949" width="34.5" height="22" rx="4" fill="#fff" stroke="#111" stroke-width="2"/><text x="1058.3" y="1966.5" font-size="17" font-weight="700" font-family="Liberation Sans, sans-serif" text-anchor="middle" fill="#111" textLength="25" lengthAdjust="spacingAndGlyphs">1W</text>
<defs><filter id="blur" x="-50%" y="-50%" width="200%" height="200%"><feGaussianBlur stdDeviation="5"/></filter></defs>
<ellipse cx="1040" cy="1940" rx="20" ry="12" fill="#000" opacity="0.6" filter="url(#blur)" transform="rotate(-50 1040 1940)"/>
<path fill-rule="evenodd" d="M1010.8,1960.8 C1004,1950 983,1928 983,1912.5 C983,1896 996,1884.4 1011.5,1884.4 C1027,1884.4 1040,1896 1040,1912.5 C1040,1928 1018,1950 1010.8,1960.8 Z M1011,1901 a11.5,11.5 0 1,0 0.01,0 Z" fill="#ff1100"/>
<defs><radialGradient id="hg" cx="0.3" cy="0.3" r="0.8"><stop offset="0.5" stop-color="#fff" stop-opacity="0"/><stop offset="1" stop-color="#000" stop-opacity="0.25"/></radialGradient></defs><circle cx="1011" cy="1912.5" r="11.5" fill="url(#hg)"/>
</svg>
</div>
<div class="abs" style="left:1694px;top:1451px;width:59px;height:588px;background:#72cbf0"></div>

<!-- tooltip -->
<div class="abs" style="left:828px;top:1480px;width:540px;height:124px;border-radius:9px;background:#12171b"></div>
<!--TIP-->

<!-- side panel -->
<div class="abs" style="left:1811px;top:1451px;width:791px;height:588px;background:#fff"></div>
<div class="abs" style="left:2601px;top:1451px;width:25px;height:588px;background:#f8f8f8;border-left:1px solid #e6e6e6"></div>
<div class="sep" style="left:1837px;top:1583px;width:738px"></div>
<div class="sep" style="left:1837px;top:1707px;width:738px"></div>
<div class="sep" style="left:1837px;top:1831.5px;width:738px"></div>
<div class="sep" style="left:1837px;top:1955.5px;width:738px"></div>

<span class='t' style='left:441.50px;top:63.47px;font-size:28.5px;line-height:28.5px;font-weight:400;color:#546e7a;transform:scaleX(1.0024);text-decoration:underline;text-decoration-thickness:1.6px;text-underline-offset:1.5px;'>Repeat Requests</span>
<span class='t' style='left:441.04px;top:134.82px;font-size:51px;line-height:51px;font-weight:700;color:#263238;transform:scaleX(0.9619);'>San Salvador</span>
<span class='t' style='left:796.96px;top:148.60px;font-size:21.5px;line-height:21.5px;font-weight:700;color:#0a6cdc;transform:scaleX(1.0406);'>REPEAT TASK</span>
<span class='t' style='left:439.85px;top:214.51px;font-size:32px;line-height:32px;font-weight:400;color:#263238;transform:scaleX(1.0768);'>ID: cb8e0e35-fb34-4259-88b7-9b758125f58f</span>
<span class='t' style='left:2386.53px;top:167.82px;font-size:29.5px;line-height:29.5px;font-weight:400;color:#1f2b33;transform:scaleX(0.9869);'>Edit</span>
<span class='t' style='left:2512.17px;top:167.82px;font-size:29.5px;line-height:29.5px;font-weight:400;color:#1f2b33;transform:scaleX(0.9171);'>Retask</span>
<span class='t' style='left:636.42px;top:436.75px;font-size:29px;line-height:29px;font-weight:700;color:#263238;transform:scaleX(1.0818);'>Repeat Task Start (UTC)</span>
<span class='t' style='left:665.73px;top:484.45px;font-size:29px;line-height:29px;font-weight:400;color:#263238;transform:scaleX(1.0721);'>2024-09-26 12:00 am</span>
<span class='t' style='left:1409.94px;top:375.89px;font-size:45.6px;line-height:45.6px;font-weight:700;color:#263238;transform:scaleX(1.0616);'>Completed</span>
<span class='t' style='left:1311.91px;top:555.03px;font-size:27.6px;line-height:27.6px;font-weight:400;color:#263238;transform:scaleX(1.0438);'>Repeat request series has finished</span>
<span class='t' style='left:2128.16px;top:437.95px;font-size:29px;line-height:29px;font-weight:700;color:#263238;transform:scaleX(1.0904);'>Repeat Task End</span>
<span class='t' style='left:2147.25px;top:484.45px;font-size:29px;line-height:29px;font-weight:400;color:#263238;transform:scaleX(1.0886);'>After 5 Collects</span>
<span class='t' style='left:471.00px;top:751.49px;font-size:26px;line-height:26px;font-weight:700;color:#90a4ae;transform:scaleX(0.9719);'>TASK NAME</span>
<span class='t' style='left:1103.50px;top:751.49px;font-size:26px;line-height:26px;font-weight:700;color:#90a4ae;transform:scaleX(1.0427);'>WINDOW OPEN</span>
<span class='t' style='left:1540.80px;top:751.49px;font-size:26px;line-height:26px;font-weight:700;color:#90a4ae;transform:scaleX(1.0117);'>WINDOW CLOSE</span>
<span class='t' style='left:1978.00px;top:751.49px;font-size:26px;line-height:26px;font-weight:700;color:#90a4ae;transform:scaleX(0.9419);'>STATUS</span>
<span class='t' style='left:469.93px;top:827.55px;font-size:29px;line-height:29px;font-weight:400;color:#0a6ad6;transform:scaleX(1.0674);-webkit-text-stroke:0.35px #0a6ad6;'>San Salvador: 6</span>
<span class='t' style='left:468.78px;top:863.35px;font-size:22.5px;line-height:22.5px;font-weight:400;color:#607d8b;transform:scaleX(1.1111);'>ID: 10f3823a-3902-449c-b73f-9848b38e625e</span>
<span class='t' style='left:1101.53px;top:843.20px;font-size:30px;line-height:30px;font-weight:400;color:#263238;transform:scaleX(0.9830);'>10/01/24 12:00 am</span>
<span class='t' style='left:1538.83px;top:843.20px;font-size:30px;line-height:30px;font-weight:400;color:#263238;transform:scaleX(0.9830);'>10/02/24 12:00 am</span>
<span class='t' style='left:1976.88px;top:843.20px;font-size:30px;line-height:30px;font-weight:400;color:#263238;transform:scaleX(1.1166);'>Completed</span>
<span class='t' style='left:2430.70px;top:844.05px;font-size:29px;line-height:29px;font-weight:700;color:#0a6ad6;transform:scaleX(1.0024);'>View Details</span>
<span class='t' style='left:469.93px;top:926.45px;font-size:29px;line-height:29px;font-weight:400;color:#0a6ad6;transform:scaleX(1.0674);-webkit-text-stroke:0.35px #0a6ad6;'>San Salvador: 5</span>
<span class='t' style='left:468.78px;top:962.25px;font-size:22.5px;line-height:22.5px;font-weight:400;color:#607d8b;transform:scaleX(1.1111);'>ID: 8daabbe3-c5ac-4be8-b361-e34772eddf6a</span>
<span class='t' style='left:1102.52px;top:942.10px;font-size:30px;line-height:30px;font-weight:400;color:#263238;transform:scaleX(0.9830);'>09/30/24 12:00 am</span>
<span class='t' style='left:1538.83px;top:942.10px;font-size:30px;line-height:30px;font-weight:400;color:#263238;transform:scaleX(0.9830);'>10/01/24 12:00 am</span>
<span class='t' style='left:1976.88px;top:942.10px;font-size:30px;line-height:30px;font-weight:400;color:#263238;transform:scaleX(1.1166);'>Completed</span>
<span class='t' style='left:2430.70px;top:942.95px;font-size:29px;line-height:29px;font-weight:700;color:#0a6ad6;transform:scaleX(1.0024);'>View Details</span>
<span class='t' style='left:469.93px;top:1025.35px;font-size:29px;line-height:29px;font-weight:400;color:#0a6ad6;transform:scaleX(1.0674);-webkit-text-stroke:0.35px #0a6ad6;'>San Salvador: 4</span>
<span class='t' style='left:468.78px;top:1061.15px;font-size:22.5px;line-height:22.5px;font-weight:400;color:#607d8b;transform:scaleX(1.1111);'>ID: 233008b2-d970-4cb7-b0e4-1146bb06fe7b</span>
<span class='t' style='left:1102.52px;top:1041.00px;font-size:30px;line-height:30px;font-weight:400;color:#263238;transform:scaleX(0.9830);'>09/29/24 12:00 am</span>
<span class='t' style='left:1539.82px;top:1041.00px;font-size:30px;line-height:30px;font-weight:400;color:#263238;transform:scaleX(0.9830);'>09/30/24 12:00 am</span>
<span class='t' style='left:1976.88px;top:1041.00px;font-size:30px;line-height:30px;font-weight:400;color:#263238;transform:scaleX(1.1166);'>Completed</span>
<span class='t' style='left:2430.70px;top:1041.85px;font-size:29px;line-height:29px;font-weight:700;color:#0a6ad6;transform:scaleX(1.0024);'>View Details</span>
<span class='t' style='left:469.93px;top:1124.25px;font-size:29px;line-height:29px;font-weight:400;color:#0a6ad6;transform:scaleX(1.0674);-webkit-text-stroke:0.35px #0a6ad6;'>San Salvador: 3</span>
<span class='t' style='left:468.78px;top:1160.05px;font-size:22.5px;line-height:22.5px;font-weight:400;color:#607d8b;transform:scaleX(1.1111);'>ID: 1b7c864c-9100-49ad-b41a-f84cc6ace0af</span>
<span class='t' style='left:1102.52px;top:1139.90px;font-size:30px;line-height:30px;font-weight:400;color:#263238;transform:scaleX(0.9830);'>09/28/24 12:00 am</span>
<span class='t' style='left:1539.82px;top:1139.90px;font-size:30px;line-height:30px;font-weight:400;color:#263238;transform:scaleX(0.9830);'>09/29/24 12:00 am</span>
<span class='t' style='left:1976.88px;top:1139.90px;font-size:30px;line-height:30px;font-weight:400;color:#263238;transform:scaleX(1.1166);'>Completed</span>
<span class='t' style='left:2430.70px;top:1140.75px;font-size:29px;line-height:29px;font-weight:700;color:#0a6ad6;transform:scaleX(1.0024);'>View Details</span>
<span class='t' style='left:469.93px;top:1223.15px;font-size:29px;line-height:29px;font-weight:400;color:#0a6ad6;transform:scaleX(1.0674);-webkit-text-stroke:0.35px #0a6ad6;'>San Salvador: 2</span>
<span class='t' style='left:468.78px;top:1258.95px;font-size:22.5px;line-height:22.5px;font-weight:400;color:#607d8b;transform:scaleX(1.1111);'>ID: 2c06ef2d-1c29-4d85-a610-d49542ea0acc</span>
<span class='t' style='left:1102.52px;top:1238.80px;font-size:30px;line-height:30px;font-weight:400;color:#263238;transform:scaleX(0.9830);'>09/27/24 12:00 am</span>
<span class='t' style='left:1539.82px;top:1238.80px;font-size:30px;line-height:30px;font-weight:400;color:#263238;transform:scaleX(0.9830);'>09/28/24 12:00 am</span>
<span class='t' style='left:1976.88px;top:1238.80px;font-size:30px;line-height:30px;font-weight:400;color:#263238;transform:scaleX(1.1166);'>Completed</span>
<span class='t' style='left:2430.70px;top:1239.65px;font-size:29px;line-height:29px;font-weight:700;color:#0a6ad6;transform:scaleX(1.0024);'>View Details</span>
<span class='t' style='left:469.93px;top:1322.05px;font-size:29px;line-height:29px;font-weight:400;color:#0a6ad6;transform:scaleX(1.0674);-webkit-text-stroke:0.35px #0a6ad6;'>San Salvador: 1</span>
<span class='t' style='left:468.78px;top:1357.85px;font-size:22.5px;line-height:22.5px;font-weight:400;color:#607d8b;transform:scaleX(1.1111);'>ID: 1c7e8209-8e13-470d-a68c-4324adfe3e3d</span>
<span class='t' style='left:1102.52px;top:1337.70px;font-size:30px;line-height:30px;font-weight:400;color:#263238;transform:scaleX(0.9830);'>09/26/24 12:00 am</span>
<span class='t' style='left:1539.82px;top:1337.70px;font-size:30px;line-height:30px;font-weight:400;color:#263238;transform:scaleX(0.9830);'>09/27/24 12:00 am</span>
<span class='t' style='left:1975.77px;top:1337.70px;font-size:30px;line-height:30px;font-weight:400;color:#263238;transform:scaleX(1.1166);'>Rejected</span>
<span class='t' style='left:2430.70px;top:1338.55px;font-size:29px;line-height:29px;font-weight:700;color:#0a6ad6;transform:scaleX(1.0024);'>View Details</span>
<span class='t' style='left:1835.97px;top:1482.09px;font-size:28px;line-height:28px;font-weight:700;color:#263238;transform:scaleX(1.0268);'>Description</span>
<span class='t' style='left:1834.85px;top:1534.59px;font-size:28px;line-height:28px;font-weight:400;color:#263238;transform:scaleX(1.0734);'>New collection type testing</span>
<span class='t' style='left:1835.97px;top:1606.29px;font-size:28px;line-height:28px;font-weight:700;color:#263238;transform:scaleX(1.0268);'>Collection Type</span>
<span class='t' style='left:1835.93px;top:1658.79px;font-size:28px;line-height:28px;font-weight:400;color:#263238;transform:scaleX(1.0734);'>Spotlight Wide</span>
<span class='t' style='left:1835.97px;top:1730.49px;font-size:28px;line-height:28px;font-weight:700;color:#263238;transform:scaleX(1.0268);'>Collection Tier</span>
<span class='t' style='left:1834.85px;top:1782.99px;font-size:28px;line-height:28px;font-weight:400;color:#263238;transform:scaleX(1.0734);'>Routine</span>
<span class='t' style='left:1835.97px;top:1854.69px;font-size:28px;line-height:28px;font-weight:700;color:#263238;transform:scaleX(1.0268);'>Collection Time</span>
<span class='t' style='left:1837.00px;top:1907.19px;font-size:28px;line-height:28px;font-weight:400;color:#263238;transform:scaleX(1.0734);'>Anytime</span>
<span class='t' style='left:1837.00px;top:1978.89px;font-size:28px;line-height:28px;font-weight:700;color:#263238;transform:scaleX(1.0268);'>Archive Holdback</span>
<span class='t' style='left:1834.85px;top:2031.39px;font-size:28px;line-height:28px;font-weight:400;color:#263238;transform:scaleX(1.0734);'>None</span>
<span class='t' style='left:981.00px;top:1506.52px;font-size:27.5px;line-height:27.5px;font-weight:400;color:#90a4ae;transform:scaleX(0.8770);'>AREA OF INTEREST</span>
<span class='t' style='left:920.35px;top:1543.06px;font-size:33px;line-height:33px;color:#fff;transform:scaleX(0.9157)'>Lat: <b>13.700</b>, Long: <b>-89.196</b></span>
</body></html>
